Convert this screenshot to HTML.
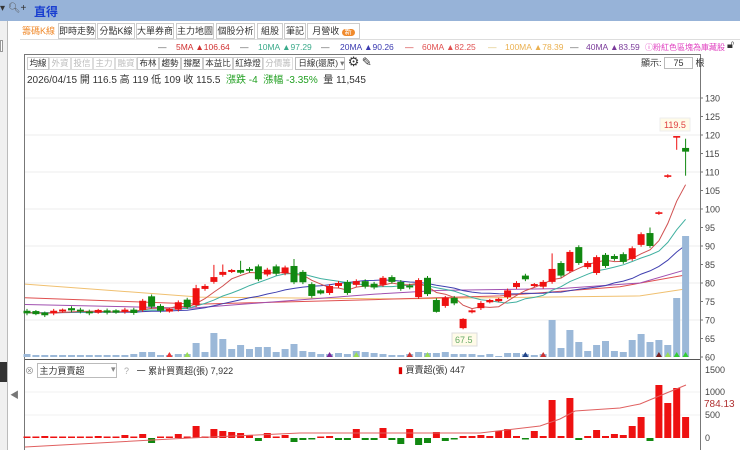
<!DOCTYPE html>
<html><head><meta charset="utf-8">
<style>
*{margin:0;padding:0;box-sizing:border-box}
body{width:740px;height:450px;overflow:hidden;background:#fff;font-family:"Liberation Sans","Noto Sans CJK TC",sans-serif;position:relative;font-size:11px;color:#333}
.abs{position:absolute}
#top{left:0;top:0;width:740px;height:21px;background:#97b3d8}
.tab{position:absolute;top:23px;height:16px;border:1px solid #ccc;background:#fff;font-size:9px;line-height:14px;text-align:center;color:#333;white-space:nowrap;overflow:hidden}
.lg{position:absolute;top:42px;font-size:8.5px;white-space:nowrap}
.b{display:inline-block;border:1px solid #ccc;width:22px;text-align:center;margin-right:0}
.g{color:#bbb;border-color:#ddd}
</style></head><body>
<div id="top" class="abs"></div>
<div class="abs" style="left:0;top:3px;font-size:10px;color:#333">▾ <span style="color:#555">🔍︎</span>+</div>
<div class="abs" style="left:34px;top:3px;font-size:12px;font-weight:bold;color:#1a3fd0">直得</div>
<div class="abs" style="left:0;top:21px;width:8px;height:429px;background:#f0f0f0;border-right:1px solid #bbb"></div>
<div class="abs" style="left:0;top:40px;width:3px;height:12px;border:1px solid #999;background:#fff"></div>
<div class="abs" style="left:0;top:362px;width:7px;height:20px;background:#333"></div>
<div class="abs" style="left:10px;top:388px;font-size:9px;color:#777">◀</div>
<div class="tab" style="left:20px;width:37px;color:#f08a2c;border-color:#fff">籌碼K線</div>
<div class="tab" style="left:58px;width:38px">即時走勢</div>
<div class="tab" style="left:97px;width:38px">分點K線</div>
<div class="tab" style="left:136px;width:38px">大單券商</div>
<div class="tab" style="left:176px;width:38px">主力地圖</div>
<div class="tab" style="left:216px;width:39px">個股分析</div>
<div class="tab" style="left:257px;width:26px">組股</div>
<div class="tab" style="left:284px;width:22px">筆記</div>
<div class="tab" style="left:307px;width:53px">月營收 <span style="background:#f08a2c;color:#fff;border-radius:6px;padding:0 3px;font-size:7px">新</span></div>
<div class="abs" style="left:20px;top:39px;width:720px;border-top:1px solid #ddd"></div>
<span class="lg" style="left:158px;color:#555">—</span><span class="lg" style="left:176px;color:#d03030">5MA ▲106.64</span>
<span class="lg" style="left:240px;color:#555">—</span><span class="lg" style="left:258px;color:#3aaa8a">10MA ▲97.29</span>
<span class="lg" style="left:321px;color:#555">—</span><span class="lg" style="left:340px;color:#3a3ab0">20MA ▲90.26</span>
<span class="lg" style="left:405px;color:#d03030">—</span><span class="lg" style="left:422px;color:#e05050">60MA ▲82.25</span>
<span class="lg" style="left:488px;color:#ddc070">—</span><span class="lg" style="left:505px;color:#eab050">100MA ▲78.39</span>
<span class="lg" style="left:570px;color:#555">—</span><span class="lg" style="left:586px;color:#7a3a9a">40MA ▲83.59</span>
<span class="lg" style="left:645px;color:#e040c0;font-size:8px">ⓘ粉紅色區塊為庫藏股</span>
<div class="abs" style="left:727px;top:39px;font-size:11px">🔓︎</div>
<div class="abs" style="left:24px;top:54px;width:677px;height:396px;border-left:1px solid #777;border-top:1px solid #777;border-right:1px solid #777"></div>
<div class="abs" style="top:56px;left:27px;font-size:8.5px;white-space:nowrap;line-height:11px">
<span class="b">均線</span><span class="b g">外資</span><span class="b g">投信</span><span class="b g">主力</span><span class="b g">融資</span><span class="b">布林</span><span class="b">趨勢</span><span class="b">撐壓</span><span class="b" style="width:30px">本益比</span><span class="b" style="width:30px">紅綠燈</span><span class="b g" style="width:30px">分價籌</span> <span style="display:inline-block;border:1px solid #bbb;width:50px;padding-left:2px">日線(還原) <span style="float:right;color:#777">▾</span></span> <span style="font-size:13px">⚙</span> <span style="font-size:12px">✎</span></div>
<div class="abs" style="top:56px;left:641px;font-size:9px;white-space:nowrap">顯示: <span style="display:inline-block;width:29px;border:1px solid #bbb;text-align:center">75</span> 根</div>
<div class="abs" style="top:71px;left:27px;font-size:10px;white-space:nowrap">2026/04/15 開 116.5 高 119 低 109 收 115.5 &nbsp;<span style="color:#22a022">漲跌 -4 &nbsp;漲幅 -3.35%</span> &nbsp;量 11,545</div>
<svg id="s" class="abs" style="left:0;top:0" width="740" height="450"></svg>
<div class="abs" style="top:363px;left:25px;font-size:9px;white-space:nowrap"><span style="color:#888">⊗</span> <span style="display:inline-block;width:80px;border:1px solid #bbb;padding-left:2px">主力買賣超 <span style="float:right;color:#888">▾</span></span>&nbsp;&nbsp;&nbsp;<span style="color:#aaa">?</span>&nbsp;&nbsp;&nbsp;<span>一 累計買賣超(張) 7,922</span></div>
<div class="abs" style="top:363px;left:398px;font-size:9px;white-space:nowrap"><span style="color:#d00">▮</span> 買賣超(張) 447</div>
<script>
var s=document.getElementById('s'),h='';
function Y(p){return 357-(p-60)*3.7}
function X(i){return 27+i*8.9}
[70,80,90,100,110,120,130].forEach(function(p){h+='<line x1="25" x2="700" y1="'+Y(p)+'" y2="'+Y(p)+'" stroke="#eee"/>'});
for(var p=60;p<=130;p+=5){h+='<line x1="700" x2="703" y1="'+Y(p)+'" y2="'+Y(p)+'" stroke="#777"/><text x="705" y="'+(Y(p)+3.5)+'" font-size="9" fill="#444" font-family="Liberation Sans">'+p+'</text>'}
var c=[[72.5,71.8],[72.2,71.8],[71.8,71.5],[71.8,72.5],[72.5,72.6],[73.2,72.6],[72.8,72.3],[72.3,71.8],[72.2,72.5],[72.6,72],[72.4,72.2],[72.2,72.8],[72.8,71.9],[72.7,75.2],[76.4,73.6],[73.8,72.5],[72.5,72.8],[72.8,74.8],[75.5,73.5],[74,78.6],[78.4,79.2],[80.3,81.6],[82.2,83],[83.2,83.3],[83.3,83],[83.8,83.3],[84.5,81],[82.3,83.6],[84.5,82.5],[82.6,84.2],[84.6,80.2],[83,80.2],[79.7,76.5],[77.8,77.4],[77.3,79.2],[79.2,80],[80.3,77.3],[79.5,80.5],[80.5,79],[79.8,78.8],[79.5,81.4],[81.6,80.3],[80.3,78.4],[79.3,78.8],[76.2,80.8],[81.4,77],[75.4,72.2],[73.8,76],[76,74.5],[67.8,70.3],[72.3,72.4],[73.2,74.6],[75,75.2],[75.3,75.5],[76.2,78],[78.9,80],[82,81],[79.4,79.5],[79,80.3],[80.3,83.8],[85.4,82],[83.2,88.4],[89.7,85.4],[84.3,85.4],[82.7,87],[87.6,84.6],[87.3,86.5],[87.8,85.7],[86.5,89.4],[90.3,93.2],[93.5,90],[98.9,98.9],[108.9,108.9],[119.5,119.5],[116.5,115.5]];
var hi={19:79.5,21:84.9,22:85,24:86,30:86.5,59:88,74:119,73:119.5,49:70.5,70:95};
var lo={49:67.5,74:109,73:116,2:70.8,46:72};
var pre=[];for(var k=0;k<25;k++)pre.push(72);
var cl=pre.concat(c.map(function(a){return a[1]}));
function ma(n,col){var pts=[];for(var i=0;i<75;i++){var sm=0;for(var j=0;j<n;j++)sm+=cl[25+i-j];pts.push(X(i)+','+Y(sm/n).toFixed(1))}h+='<polyline points="'+pts.join(' ')+'" fill="none" stroke="'+col+'" stroke-width="1"/>'}
function hand(pts,col){h+='<polyline points="'+pts.map(function(a){return a[0]+','+Y(a[1]).toFixed(1)}).join(' ')+'" fill="none" stroke="'+col+'" stroke-width="1"/>'}
hand([[25,79.7],[200,76.2],[400,75.7],[640,76.5],[686,78.4]],'#f0c070');
hand([[25,76],[200,74.3],[375,75.5],[500,76.5],[620,79],[686,82.2]],'#e05050');
hand([[25,74.2],[190,73.2],[375,77],[440,78],[560,78.5],[640,80],[686,83.6]],'#a050b0');
ma(20,'#4040b0');ma(10,'#40b0a0');ma(5,'#d05050');
c.forEach(function(a,i){var o=a[0],cc=a[1],x=X(i),up=cc>=o,col=up?'#ee1111':'#118811';
var H=hi[i]!=null?hi[i]:Math.max(o,cc)+0.5,L=lo[i]!=null?lo[i]:Math.min(o,cc)-0.5;
h+='<line x1="'+x+'" x2="'+x+'" y1="'+Y(H)+'" y2="'+Y(L)+'" stroke="'+col+'"/>';
var t=Y(Math.max(o,cc)),b=Y(Math.min(o,cc));if(b-t<1.5){t-=0.8;b+=0.8}
h+='<rect x="'+(x-3.5)+'" y="'+t+'" width="7" height="'+(b-t)+'" fill="'+col+'"/>'});
h+='<rect x="660" y="118" width="30" height="13" fill="#fffbe8" stroke="#eee"/><text x="664" y="128" font-size="9" fill="#e04040" font-family="Liberation Sans">119.5</text>';
h+='<rect x="452" y="333" width="25" height="13" fill="#fffbe8" stroke="#ddd"/><text x="455" y="343" font-size="9" fill="#6a6" font-family="Liberation Sans">67.5</text>';
var v=[3,2,2,2,2,2,2,2,2,2,2,2,3,5,5,2,2,3,3,14,5,24,18,8,12,8,10,10,5,8,13,6,5,3,3,4,3,6,5,4,3,2,2,3,5,4,4,5,3,3,3,2,3,1,4,4,3,2,3,37,9,27,15,6,12,16,6,5,17,23,15,17,12,59,121];
v.forEach(function(hh,i){h+='<rect x="'+(X(i)-3.5)+'" y="'+(357-hh)+'" width="7" height="'+hh+'" fill="#9bb8d8"/>'});
[[16,'#e33'],[18,'#9d5'],[34,'#7a2a9a'],[37,'#9d5'],[43,'#c33'],[45,'#9d5'],[56,'#248'],[58,'#c33'],[71,'#7a2020'],[72,'#9d5'],[73,'#3c3'],[74,'#3c3']].forEach(function(t){var x=X(t[0]);h+='<polygon points="'+(x-3)+',357 '+(x+3)+',357 '+x+',352" fill="'+t[1]+'"/>'});
h+='<line x1="25" x2="700" y1="359.5" y2="359.5" stroke="#555"/>';
h+='<line x1="25" x2="700" y1="392" y2="392" stroke="#f0f0f0"/><line x1="25" x2="700" y1="415" y2="415" stroke="#f0f0f0"/>';
[[1500,370],[1000,392],[500,415],[0,438]].forEach(function(a){h+='<text x="705" y="'+(a[1]+3)+'" font-size="9" fill="#444" font-family="Liberation Sans">'+a[0]+'</text>'});
h+='<text x="704" y="407" font-size="10" fill="#b03030" font-family="Liberation Sans">784.13</text>';
var bb=[1,1,2,1.5,1.5,1,1,1,2,1,1,3,1,4,-5,1,1,4,1,12,1,9,7,6,5,3,-3,5,1,3,-4,-2,-1,1,2,-2,-2,9,-2,-2,10,-2,-6,9,-7,-5,6,-3,-1,2,2,3,2,7,9,2,-1,7,2,38,2,40,-2,2,8,2,4,3,12,21,-3,53,35,50,21];
bb.forEach(function(b,i){var x=X(i)-3.5,col=b>=0?'#ee1111':'#118811',hh=Math.max(Math.abs(b),1.5);h+='<rect x="'+x+'" y="'+(b>=0?438-hh:438)+'" width="7" height="'+hh+'" fill="'+col+'"/>'});
var rl=[[25,447],[190,438],[300,433],[480,433],[540,426],[560,419],[575,411],[620,408],[640,404],[652,399],[686,385]];
h+='<polyline points="'+rl.map(function(a){return a.join(',')}).join(' ')+'" fill="none" stroke="#e06060" stroke-width="1"/>';
s.innerHTML=h;
</script>
</body></html>
